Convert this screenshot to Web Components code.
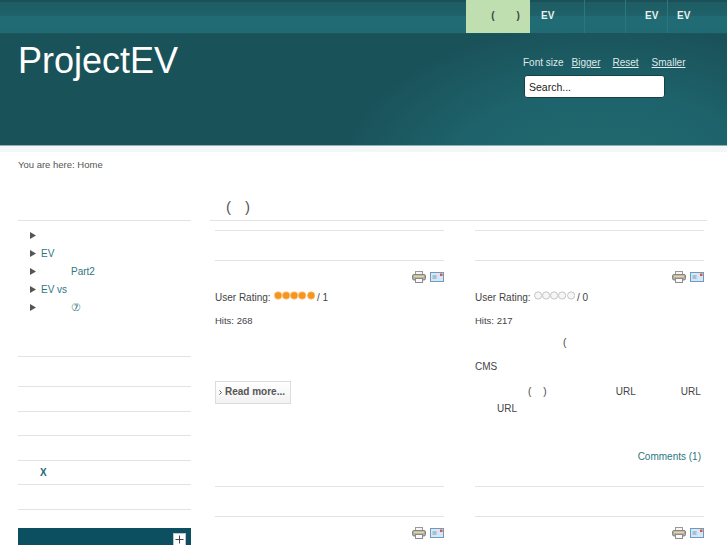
<!DOCTYPE html>
<html>
<head>
<meta charset="utf-8">
<title>ProjectEV</title>
<style>
  html, body { margin: 0; height: 545px; overflow: hidden; background: #fff; }
  body { font-family: "Liberation Sans", Arial, sans-serif; font-size: 10px; color: #444; }
</style>
</head>
<body>

<site-header>
  <top-nav>
    <nav-item active width="64"><span>(<i style="display:inline-block;width:22px"></i>)</span></nav-item>
    <nav-item width="54" align="left" pad="11">EV</nav-item>
    <nav-item width="41"></nav-item>
    <nav-item width="42" align="left" pad="19">EV</nav-item>
    <nav-item width="60" align="left" pad="9">EV</nav-item>
  </top-nav>
</site-header>

<bread-crumb>You are here: Home</bread-crumb>

<page-body>
  <side-bar slot="side">
    <side-menu>
      <menu-row></menu-row>
      <menu-row>EV</menu-row>
      <menu-row indent="30">Part2</menu-row>
      <menu-row>EV vs</menu-row>
      <menu-row indent="30"><small style="font-size:10.5px">⑦</small></menu-row>
    </side-menu>
    <side-row height="30"></side-row>
    <side-row height="25"></side-row>
    <side-row height="24"></side-row>
    <side-row height="25"></side-row>
    <side-row height="24"><b style="margin-left:22px;color:#1d6a74;font-size:10px;line-height:23px;display:block">X</b></side-row>
    <side-row height="25"></side-row>
    <side-row height="19"></side-row>
    <blue-box></blue-box>
  </side-bar>

  <article-title slot="title"><span>(</span><i style="display:inline-block;width:14px"></i><span>)</span></article-title>

  <article-col slot="left">
    <article-card hits="268" rating="1" stars="on">
      <read-more>Read more...</read-more>
    </article-card>
    <article-card tail></article-card>
  </article-col>

  <article-col slot="right">
    <article-card hits="217" rating="0" stars="off">
      <article-text>
        <p style="padding-left:88px;margin:0 0 10px">(</p>
        <p style="margin:0 0 11px">CMS</p>
        <p style="margin:0;display:flex;height:17px"><span style="margin-left:53px">(</span><span style="margin-left:12px">)</span><span style="margin-left:69px">URL</span><span style="margin-left:45px">URL</span></p>
        <p style="padding-left:22px;margin:0">URL</p>
      </article-text>
      <comment-link>Comments (1)</comment-link>
    </article-card>
    <article-card tail></article-card>
  </article-col>
</page-body>

<script>
class SiteHeader extends HTMLElement {
  constructor() {
    super();
    this.attachShadow({mode: 'open'}).innerHTML = `
      <style>
        :host { display: block; height: 152px; background: #f4f7f7; }
        .band {
          height: 145px;
          border-bottom: 1px solid #8fb0b2;
          background:
            radial-gradient(ellipse 260px 150px at 600px 175px, #20696f 0, #1e636b 55%, rgba(26,82,90,0) 100%),
            #1a525a;
        }
        .top {
          height: 33px;
          border-bottom: 1px solid #1c565d;
          background: linear-gradient(#1b5058 0, #1b5058 2px, #1e5c63 2px, #1f6269 16px, #206c75 16px, #206a73 33px);
        }
        .row { display: flex; justify-content: space-between; }
        h1 { margin: 6px 0 0 18px; font-weight: normal; font-size: 36px; line-height: 42px; color: #fff; }
        .tools { width: 204px; padding-top: 17px; color: #dfeaea; font-size: 10px; }
        .sizes { display: flex; height: 24px; line-height: 24px; }
        .sizes a { color: #dfeaea; text-decoration: underline; }
        input {
          display: block; box-sizing: border-box; width: 141px; height: 23px; margin: 0 0 0 1px;
          padding: 0 4px; border: 1px solid #134249; border-radius: 3px; background: #fff;
          font: 10.5px "Liberation Sans", Arial, sans-serif; color: #222; outline: none;
        }
      </style>
      <div class="band">
        <div class="top"><slot></slot></div>
        <div class="row">
          <h1>ProjectEV</h1>
          <div class="tools">
            <div class="sizes"><span>Font size</span><a style="margin-left:8px">Bigger</a><a style="margin-left:12px">Reset</a><a style="margin-left:13px">Smaller</a></div>
            <input type="text" value="Search...">
          </div>
        </div>
      </div>`;
  }
}
customElements.define('site-header', SiteHeader);

class TopNav extends HTMLElement {
  constructor() {
    super();
    this.attachShadow({mode: 'open'}).innerHTML = `
      <style>
        :host { display: flex; justify-content: flex-end; height: 33px; }
      </style>
      <slot></slot>`;
  }
}
customElements.define('top-nav', TopNav);

class NavItem extends HTMLElement {
  constructor() {
    super();
    this.attachShadow({mode: 'open'}).innerHTML = `
      <style>
        :host { display: block; box-sizing: border-box; height: 33px; line-height: 31px; font-size: 10px; font-weight: bold; color: #e8f0f0; border-left: 1px solid #2a7780; text-align: center; }
        :host([active]) { background: #c0dfb0; color: #444; border-left: 0; padding-left: 15px; }
        :host([align="left"]) { text-align: left; }
        :host(:nth-child(2)) { border-left: 0; }
      </style>
      <slot></slot>`;
  }
  connectedCallback() {
    this.style.width = this.getAttribute('width') + 'px';
    if(this.hasAttribute('pad')) {
      this.style.paddingLeft = this.getAttribute('pad') + 'px';
    }
  }
}
customElements.define('nav-item', NavItem);

class BreadCrumb extends HTMLElement {
  constructor() {
    super();
    this.attachShadow({mode: 'open'}).innerHTML = `
      <style>
        :host { display: block; height: 26px; padding: 7px 0 0 18px; box-sizing: border-box; font-size: 9.5px; line-height: 12px; color: #555; }
      </style>
      <slot></slot>`;
  }
}
customElements.define('bread-crumb', BreadCrumb);

class PageBody extends HTMLElement {
  constructor() {
    super();
    this.attachShadow({mode: 'open'}).innerHTML = `
      <style>
        :host { display: grid; grid-template-columns: 173px 253px 260px; grid-template-rows: 65px auto; height: 367px; overflow: hidden; padding-left: 18px; }
        .side { grid-row: 1 / span 2; }
        .title { grid-column: 2 / span 2; margin: 14px 0 0 19px; }
        .left { margin-left: 24px; }
        .right { margin-left: 31px; width: 229px; }
      </style>
      <div class="side"><slot name="side"></slot></div>
      <div class="title"><slot name="title"></slot></div>
      <div class="left"><slot name="left"></slot></div>
      <div class="right"><slot name="right"></slot></div>`;
  }
}
customElements.define('page-body', PageBody);

class SideBar extends HTMLElement {
  constructor() {
    super();
    this.attachShadow({mode: 'open'}).innerHTML = `
      <style>
        :host { display: block; padding-top: 42px; }
      </style>
      <slot></slot>`;
  }
}
customElements.define('side-bar', SideBar);

class SideMenu extends HTMLElement {
  constructor() {
    super();
    this.attachShadow({mode: 'open'}).innerHTML = `
      <style>
        :host { display: block; box-sizing: border-box; height: 136px; padding: 5px 0 0 12px; border-top: 1px solid #e3e3e3; }
      </style>
      <slot></slot>`;
  }
}
customElements.define('side-menu', SideMenu);

class MenuRow extends HTMLElement {
  constructor() {
    super();
    this.attachShadow({mode: 'open'}).innerHTML = `
      <style>
        :host { display: flex; align-items: center; height: 18px; color: #2c7781; font-size: 10px; }
        svg { width: 6px; height: 7px; margin-right: 5px; flex: none; }
      </style>
      <svg viewBox="0 0 6 7"><path d="M0 0L6 3.5L0 7Z" fill="#555"/></svg>
      <div id="t"><slot></slot></div>`;
  }
  connectedCallback() {
    this.shadowRoot.getElementById('t').style.marginLeft = (this.getAttribute('indent') || 0) + 'px';
  }
}
customElements.define('menu-row', MenuRow);

class SideRow extends HTMLElement {
  constructor() {
    super();
    this.attachShadow({mode: 'open'}).innerHTML = `
      <style>
        :host { display: block; box-sizing: border-box; border-top: 1px solid #e3e3e3; }
      </style>
      <slot></slot>`;
  }
  connectedCallback() {
    this.style.height = this.getAttribute('height') + 'px';
  }
}
customElements.define('side-row', SideRow);

class BlueBox extends HTMLElement {
  constructor() {
    super();
    this.attachShadow({mode: 'open'}).innerHTML = `
      <style>
        :host { display: flex; justify-content: flex-end; box-sizing: border-box; height: 60px; padding: 5px 5px 0 0; background: #0c4f61; }
        .plus { width: 13px; height: 13px; box-sizing: border-box; background: #fff; border: 1px solid #b9c8cc; display: flex; align-items: center; justify-content: center; }
      </style>
      <div class="plus"><svg width="9" height="9" viewBox="0 0 9 9"><path d="M4.5 0.5V8.5M0.5 4.5H8.5" stroke="#444" stroke-width="1"/></svg></div>`;
  }
}
customElements.define('blue-box', BlueBox);

class ArticleTitle extends HTMLElement {
  constructor() {
    super();
    this.attachShadow({mode: 'open'}).innerHTML = `
      <style>
        :host { display: block; box-sizing: border-box; height: 29px; width: 497px; padding: 2px 0 0 16px; border-bottom: 1px solid #e3e3e3; font-size: 15px; line-height: 26px; color: #555; }
      </style>
      <slot></slot>`;
  }
}
customElements.define('article-title', ArticleTitle);

class ArticleCol extends HTMLElement {
  constructor() {
    super();
    this.attachShadow({mode: 'open'}).innerHTML = `
      <style>
        :host { display: block; width: 229px; margin-top: -13px; }
      </style>
      <slot></slot>`;
  }
}
customElements.define('article-col', ArticleCol);

const PRINT_ICON = `<svg width="14" height="12" viewBox="0 0 14 12"><rect x="3.5" y=".5" width="7" height="3.5" fill="#f6f6f6" stroke="#999"/><rect x=".5" y="3.5" width="13" height="5.5" rx="1.5" fill="#aaa" stroke="#858585"/><rect x="2" y="4.6" width="10" height="1.6" fill="#ead49a"/><rect x="3.5" y="7.5" width="7" height="4" fill="#fafafa" stroke="#8c8c8c"/></svg>`;
const MAIL_ICON = `<svg width="14" height="10" viewBox="0 0 14 10"><rect x=".5" y=".5" width="13" height="9" fill="#d6e6f4" stroke="#6f9abc"/><path d="M2.5 4H6.5M2.5 6H6.5" stroke="#6f9abc"/><rect x="10" y="1.5" width="2.5" height="2.5" fill="#e2553c"/></svg>`;

class ArticleCard extends HTMLElement {
  constructor() {
    super();
    this.attachShadow({mode: 'open'}).innerHTML = `
      <style>
        :host { display: block; }
        .rule { height: 30px; box-sizing: border-box; border-top: 1px solid #e3e3e3; }
        .icons { display: flex; justify-content: flex-end; align-items: center; gap: 4px; height: 32px; box-sizing: border-box; }
        .rating { display: flex; align-items: center; height: 16px; line-height: 16px; margin-top: -3px; }
        .stars { display: flex; margin: -5px 2px 0 3px; }
        .hits { font-size: 9.5px; line-height: 12px; margin-top: 9px; }
      </style>
      <div class="rule"></div>
      <div class="rule" style="height:auto"></div>
      <div class="icons">${PRINT_ICON}${MAIL_ICON}</div>
      <div id="meta"></div>
      <slot></slot>`;
  }
  connectedCallback() {
    if(this.hasAttribute('tail')) {
      return;
    }
    const on = this.getAttribute('stars') === 'on';
    let stars = '';
    for(let i = 0; i < 5; i++) {
      stars += on
        ? '<svg width="8.3" height="9" viewBox="0 0 8.3 9" style="flex:none"><circle cx="4.15" cy="4.5" r="3.7" fill="#f7941d" stroke="#f9c27a" stroke-width=".8"/></svg>'
        : '<svg width="8.3" height="9" viewBox="0 0 8.3 9" style="flex:none"><circle cx="4.15" cy="4.5" r="3.6" fill="#f6f6f6" stroke="#c4c4c4" stroke-width="1"/></svg>';
    }
    this.shadowRoot.getElementById('meta').innerHTML = `
      <div class="rating"><span>User Rating:</span><span class="stars">${stars}</span><span>/ ${this.getAttribute('rating')}</span></div>
      <div class="hits">Hits: ${this.getAttribute('hits')}</div>`;
  }
}
customElements.define('article-card', ArticleCard);

class ReadMore extends HTMLElement {
  constructor() {
    super();
    this.attachShadow({mode: 'open'}).innerHTML = `
      <style>
        :host { display: flex; align-items: center; box-sizing: border-box; width: 76px; height: 23px; margin: 54px 0 82px; padding: 0 0 3px 3px; background: linear-gradient(#fff, #f2f2f2); border: 1px solid #dcdcdc; font-size: 10px; font-weight: bold; color: #555; white-space: nowrap; }
        svg { margin: 2px 3px 0 0; }
      </style>
      <svg width="3" height="5" viewBox="0 0 3 5"><path d="M.5 .5L2.5 2.5L.5 4.5" fill="none" stroke="#555"/></svg>
      <slot></slot>`;
  }
}
customElements.define('read-more', ReadMore);

class ArticleText extends HTMLElement {
  constructor() {
    super();
    this.attachShadow({mode: 'open'}).innerHTML = `
      <style>
        :host { display: block; margin-top: 9px; line-height: 14px; }
      </style>
      <slot></slot>`;
  }
}
customElements.define('article-text', ArticleText);

class CommentLink extends HTMLElement {
  constructor() {
    super();
    this.attachShadow({mode: 'open'}).innerHTML = `
      <style>
        :host { display: block; text-align: right; margin: 34px 3px 22px 0; color: #2c7781; line-height: 14px; font-size: 10px; }
      </style>
      <slot></slot>`;
  }
}
customElements.define('comment-link', CommentLink);
</script>
</body>
</html>
